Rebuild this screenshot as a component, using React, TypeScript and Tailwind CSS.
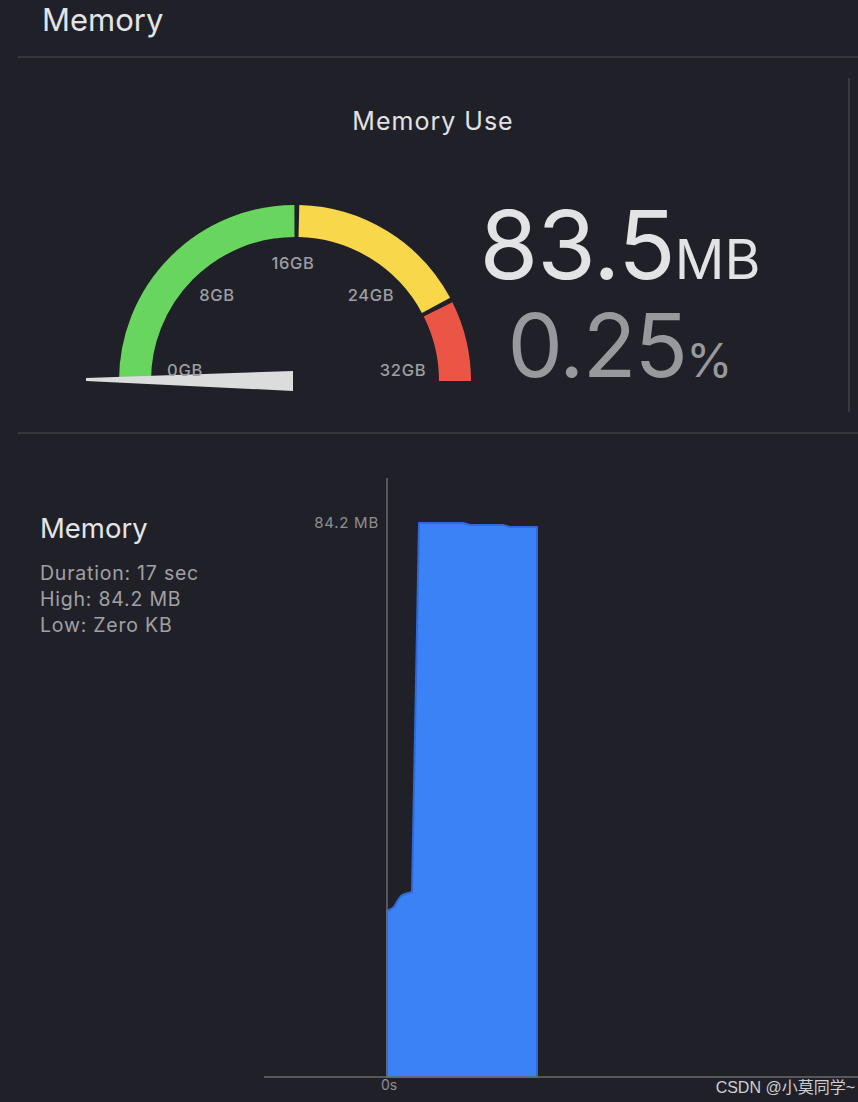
import React from "react";

const CX = 215;
const CY = 191;
const RM = 160;

function pt(deg: number, r: number) {
  const a = (deg * Math.PI) / 180;
  return [CX + r * Math.cos(a), CY - r * Math.sin(a)];
}

function arc(from: number, to: number) {
  const [x1, y1] = pt(from, RM);
  const [x2, y2] = pt(to, RM);
  return `M ${x1} ${y1} A ${RM} ${RM} 0 0 1 ${x2} ${y2}`;
}

function Gauge() {
  const label = "fill-[#9d9ea3] text-[16.5px] font-medium tracking-[0.04em]";
  return (
    <svg width="400" height="210" viewBox="0 0 400 210" className="shrink-0">
      <path d={arc(180, 90.2)} stroke="#67d55e" strokeWidth="32" fill="none" />
      <path d={arc(88.6, 28.2)} stroke="#f8d74a" strokeWidth="32" fill="none" />
      <path d={arc(26.6, 0)} stroke="#eb5546" strokeWidth="32" fill="none" />
      <polygon points="6,188 213,181 213,201 6,191" fill="#dcdcdc" />
      <text x="213" y="79" textAnchor="middle" className={label}>16GB</text>
      <text x="137" y="111" textAnchor="middle" className={label}>8GB</text>
      <text x="291" y="111" textAnchor="middle" className={label}>24GB</text>
      <text x="105" y="186" textAnchor="middle" className={label}>0GB</text>
      <text x="323" y="186" textAnchor="middle" className={label}>32GB</text>
    </svg>
  );
}

function Chart() {
  const d =
    "M 123 643 L 123 477 L 127 475 L 130 473 L 134 466 L 137 462 L 141 460 L 148 458 L 155 89 L 199 89 L 206 91 L 239 91 L 246 93 L 273 93 L 273 643 Z";
  return (
    <svg width="594" height="668" viewBox="0 0 594 668" className="shrink-0">
      <path d={d} fill="#3b82f6" stroke="#2f6bd6" strokeWidth="2" strokeLinejoin="round" />
      <line x1="123" y1="44" x2="123" y2="643" stroke="#68696d" strokeWidth="1.5" />
      <line x1="0" y1="643" x2="594" y2="643" stroke="#68696d" strokeWidth="1.5" />
      <text x="115" y="94" textAnchor="end" className="fill-[#8e8f94] text-[15px] tracking-[0.05em]">84.2 MB</text>
      <text x="117" y="656" className="fill-[#8e8f94] text-[14px]">0s</text>
      <text
        x="591"
        y="659"
        textAnchor="end"
        className="fill-[#cfcfd1] text-[16px]"
        style={{ fontFamily: "'Liberation Sans', 'Noto Sans CJK SC', sans-serif" }}
      >
        CSDN @小莫同学~
      </text>
    </svg>
  );
}

export default function App() {
  return (
    <div className="w-[858px] h-[1102px] bg-[#202128] overflow-hidden flex flex-col font-['Inter','Noto_Sans',sans-serif]">
      <div className="h-[56px] pl-[42px] pt-[1px] text-[31px] leading-[38px] text-[#e4e4e6]">Memory</div>
      <div className="ml-[18px] h-[2px] bg-[#36373c]" />
      <div className="ml-[18px] h-[374px] pt-[20px] pb-[20px] flex">
        <div className="flex-1 mr-[8px] border-r-2 border-[#393a3f] flex flex-col">
          <div className="mt-[27px] text-center text-[25px] leading-[32px] tracking-[0.04em] text-[#e2e2e4]">Memory Use</div>
          <div className="mt-[53px] flex items-start">
            <div className="ml-[62px]">
              <Gauge />
            </div>
            <div className="w-[280px] flex flex-col items-center">
              <div className="mt-[7px] flex items-baseline leading-none text-[#e3e3e5]">
                <span className="text-[95px] tracking-[-0.01em]">83.5</span>
                <span className="text-[55px]">MB</span>
              </div>
              <div className="mt-[9px] flex items-baseline leading-none text-[#98999d]">
                <span className="text-[88px] tracking-[-0.02em]">0.25</span>
                <span className="text-[47px]">%</span>
              </div>
            </div>
          </div>
        </div>
      </div>
      <div className="ml-[18px] h-[2px] bg-[#36373c]" />
      <div className="flex flex-1">
        <div className="w-[264px] pl-[40px] pt-[77px] shrink-0">
          <div className="text-[27.5px] leading-[34px] text-[#e5e5e7]">Memory</div>
          <div className="mt-[15px] text-[19.5px] leading-[26px] tracking-[0.04em] text-[#a0a0a5]">
            <div>Duration: 17 sec</div>
            <div>High: 84.2 MB</div>
            <div>Low: Zero KB</div>
          </div>
        </div>
        <Chart />
      </div>
    </div>
  );
}
